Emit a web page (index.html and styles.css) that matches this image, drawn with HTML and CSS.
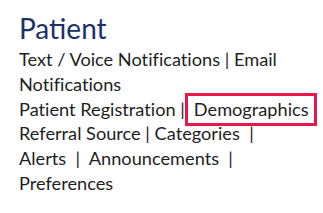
FILE: index.html
```html
<!DOCTYPE html>
<html lang="en">
<head>
  <meta charset="UTF-8">
  <title>Patient</title>
  <link rel="stylesheet" href="styles.css">
</head>
<body>
  <div class="section">
    <h2>Patient</h2>
    <p class="links">
      <a href="#">Text / Voice Notifications</a> | <a href="#">Email<br>Notifications</a><br>
      <a href="#">Patient Registration</a> |<a href="#" class="marked">Demographics</a><br>
      <a href="#">Referral Source</a> | <a href="#">Categories</a> &nbsp;|<br>
      <a href="#">Alerts</a> &nbsp;| &nbsp;<a href="#">Announcements</a> &nbsp;|<br>
      <a href="#">Preferences</a>
    </p>
  </div>
</body>
</html>
```

FILE: styles.css
```css
body {
  margin: 0;
  font-family: Lato, "Open Sans", sans-serif;
  background: #fff;
}
.section {
  padding: 10px 19px;
}
h2 {
  margin: 0 0 1px;
  font-size: 28px;
  font-weight: normal;
  line-height: 36px;
  color: #1b3168;
}
.links {
  margin: 0;
  font-size: 18.2px;
  line-height: 24.8px;
  color: #1e1e1e;
  white-space: nowrap;
  font-variant-ligatures: none;
}
.links a {
  color: #1e1e1e;
  text-decoration: none;
}
.links .marked {
  border: 3px solid #e8194a;
  padding: 2px 5px 3px 6px;
}
```
